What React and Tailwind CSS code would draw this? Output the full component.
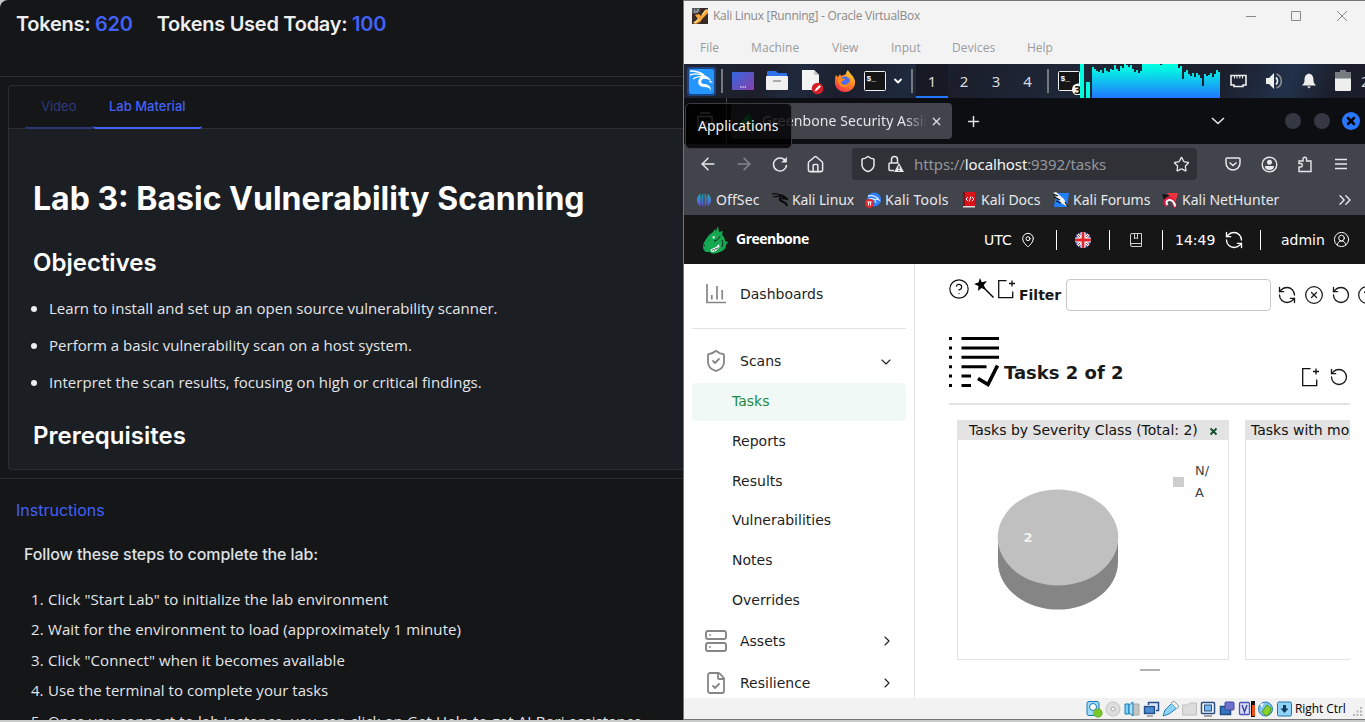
import React from 'react';
import {
  ArrowLeft, ArrowRight, ChevronDown, ChevronRight, ChevronsRight, CircleQuestionMark, CircleUserRound, CircleX,
  FileCheck, House, MapPin, Plus, RefreshCcw, RotateCcw, Server, Shield, ShieldCheck, Star, X,
} from 'lucide-react';

const SEGOE = "font-['Open_Sans','Noto_Sans',sans-serif]";
const NOTO = "font-['Noto_Sans',sans-serif]";
const DEJAVU = "font-['DejaVu_Sans',sans-serif]";

/* ---------- Lab page ---------- */

function LabPage() {
  const steps = [
    'Click "Start Lab" to initialize the lab environment',
    'Wait for the environment to load (approximately 1 minute)',
    'Click "Connect" when it becomes available',
    'Use the terminal to complete your tasks',
    'Once you connect to lab instance, you can click on Get Help to get AI Bori assistance',
  ];
  const spacing = ['tracking-[0.08px]', 'tracking-[0.08px]', 'tracking-[0.08px]', 'tracking-[0.03px]', 'tracking-[0.11px]'];
  return (
    <section className="flex h-[720px] w-[683px] shrink-0 flex-col overflow-hidden rounded-tl-lg bg-[#151618] font-['Inter',sans-serif]">
      <header className="flex h-[77px] shrink-0 gap-6 border-b border-[#2c2d31] pt-[10px] pl-4 text-xl font-semibold tracking-[-0.27px] text-[#eceef0]">
        <div>Tokens: <span className="text-[#4261f6]">620</span></div>
        <div>Tokens Used Today: <span className="text-[#4261f6]">100</span></div>
      </header>

      <div className="mt-2 ml-2 h-[385px] shrink-0 overflow-hidden rounded-l-[4px] border border-r-0 border-[#2c2e32] bg-[#1b1e23]">
        <nav className="flex h-[43px] border-b border-[#2c2e32] bg-[#151618] pl-4 text-[13px] leading-[41px]">
          <div className="h-[43px] w-[68px] rounded-b-[3px] border-b-2 border-[#2a3878] pl-4 text-[#2d3b80]">Video</div>
          <div className="h-[43px] w-[109px] rounded-b-[3px] border-b-2 border-[#4261f6] pl-4 font-medium text-[#4261f6]">Lab Material</div>
        </nav>
        <article className="pl-6 text-white">
          <h1 className="mt-[50px] text-[32px] leading-[40px] font-bold">Lab 3: Basic Vulnerability Scanning</h1>
          <h2 className="mt-[29px] text-2xl leading-[30px] font-semibold">Objectives</h2>
          <ul className={`mt-[12px] text-[15px] leading-[37px] text-[#e4e6e9] ${SEGOE}`}>
            {[
              'Learn to install and set up an open source vulnerability scanner.',
              'Perform a basic vulnerability scan on a host system.',
              'Interpret the scan results, focusing on high or critical findings.',
            ].map((t) => (
              <li key={t} className="flex items-center whitespace-nowrap tracking-[0.03px]">
                <span className="mr-[12px] -ml-[2px] size-[6px] rounded-full bg-[#eceef0]" />
                {t}
              </li>
            ))}
          </ul>
          <h2 className="mt-[20px] text-2xl leading-[30px] font-semibold">Prerequisites</h2>
        </article>
      </div>

      <div className="mt-2 flex-1 border-t border-[#2c2d31]">
        <h3 className="mt-[19px] ml-4 text-base leading-6 text-[#4261f6]">Instructions</h3>
        <p className="mt-[20px] ml-6 text-base leading-6 font-medium tracking-[-0.09px] text-[#dfe1e4]">Follow these steps to complete the lab:</p>
        <ol className={`mt-[18px] text-[15px] leading-[30.4px] text-[#e4e6e9] ${SEGOE}`}>
          {steps.map((t, i) => (
            <li key={t} className={`flex whitespace-nowrap ${spacing[i]}`}>
              <span className="w-[48px] shrink-0 pl-[31px]">{i + 1}.</span>
              {t}
            </li>
          ))}
        </ol>
      </div>
    </section>
  );
}

/* ---------- VirtualBox chrome ---------- */

function TitleBar() {
  return (
    <div className="flex h-[30px] shrink-0 items-center bg-[#f3f3f3] pl-2 text-[#8a8a8a]">
      <svg className="size-4" viewBox="0 0 16 16">
        <rect width="16" height="16" fill="#3a2a26" />
        <path d="M0 0h8v4L2 6 0 5z" fill="#555a60" />
        <path d="M2 2h1M5 2h2M2 4h4" stroke="#ccc" />
        <path d="M3 7l4-1 2 2 4-6h3v3l-5 5-3 4-4 2-3-1 5-4z" fill="#f7a63b" />
        <path d="M10 7l4-5h2M2 15l5-4" stroke="#ffe08a" strokeWidth="1.2" fill="none" />
      </svg>
      <span className={`ml-[5px] w-[533px] shrink-0 text-xs whitespace-nowrap tracking-[-0.28px] ${SEGOE}`}>Kali Linux [Running] - Oracle VirtualBox</span>
      <svg className="h-[12px] w-[104px]" viewBox="0 0 104 12" fill="none" stroke="#8a8a8a">
        <path d="M0 6.500h10M45.500 1.500h9v9h-9zM91 1l10 10M101 1l-10 10" />
      </svg>
    </div>
  );
}

function MenuBar() {
  return (
    <div className={`flex h-[33px] shrink-0 items-center bg-[#f3f3f3] pl-4 text-xs text-[#9b9b9b] ${SEGOE}`}>
      <span className="w-[51px]">File</span>
      <span className="w-[81px] tracking-[0.1px]">Machine</span>
      <span className="w-[59px]">View</span>
      <span className="w-[61px]">Input</span>
      <span className="w-[75px] tracking-[0.1px]">Devices</span>
      <span>Help</span>
    </div>
  );
}

function Terminal({ badge }) {
  return (
    <svg className="h-[28px] w-[22px] shrink-0" viewBox="0 0 22 28">
      <rect x=".5" y="4.500" width="21" height="19" rx="1" fill="#151515" stroke="#f0f0f0" />
      <text x="2.500" y="14" fontSize="8" fontWeight="bold" fill="#fff" fontFamily="Liberation Mono, monospace">$_</text>
      {badge && (
        <g>
          <circle cx="20" cy="22.500" r="6" fill="#f4f4f4" />
          <text x="16" y="27" fontSize="11" fontWeight="bold" fill="#111" fontFamily="DejaVu Sans, sans-serif">3</text>
        </g>
      )}
    </svg>
  );
}

const LOAD = [
  3, 5, 7, 8, 6, 9, 4, 7, 8, 5, 6, 1, 5, 7, 2, 4, 0, 1, 3, 1, 5, 8, 6, 9,
  7, 0, 0, 0, 0, 0, 0, 0, 0, 0, 1, 0, 0, 0, 0, 0, 0, 0, 0, 4,
  2, 15, 8, 6, 10, 12, 9, 13, 9, 11, 14, 22, 10, 12, 11, 9, 13, 10, 6, 8,
];

function CpuGraph() {
  return (
    <svg className="h-[34px] w-[140px] shrink-0" viewBox="0 0 140 34" shapeRendering="crispEdges">
      <defs>
        <linearGradient id="load" x1="0" y1="0" x2="0" y2="34" gradientUnits="userSpaceOnUse">
          <stop offset="0" stopColor="#00ffe0" />
          <stop offset=".2" stopColor="#04eee5" />
          <stop offset="1" stopColor="#2277ff" />
        </linearGradient>
      </defs>
      <rect width="4" height="34" fill="#00ffe0" />
      <rect x="6" y="18" width="4" height="16" fill="#00ffe0" />
      {LOAD.map((top, i) => (
        <rect key={i} x={12 + i * 2} y={top} width="2" height={34 - top} fill="url(#load)" />
      ))}
    </svg>
  );
}

function KaliPanel() {
  return (
    <div className={`flex h-[34px] shrink-0 items-center overflow-hidden bg-[#1c202d] bg-[linear-gradient(115deg,#1f2635_0%,#1c1f2b_12%,#202a3d_17%,#1b1e2b_25%,#1f2a3e_33%,#1b1e2a_40%,#1e2738_55%,#1b1f2c_78%,#22314a_88%,#1b1e2a_95%)] text-[15px] text-[#d8dade] ${NOTO}`}>
      <svg className="ml-[2px] size-[32px] shrink-0" viewBox="0 0 32 32">
        <rect x="1" y="2" width="29" height="29" rx="3" fill="#1b62c9" opacity=".55" />
        <rect x="3" y="4" width="25" height="25" rx="2" fill="#2596ff" />
        <path d="M4 6c5 0 10 1 14 4M4 10c5-2 10-1 14 1M7 14c4-3 8-3 12-1" stroke="#fff" strokeWidth="1.400" fill="none" />
        <path d="M15 9c4 1 8 3 10 6-3 0-5-2-8-1-3 2-2 5 1 5 4 0 7 2 7 7-1-3-3-4-7-4-5 0-7-4-5-8 1-2 3-3 4-3z" fill="#fff" />
        <path d="M24 15l3 3-4-1z" fill="#fff" />
      </svg>
      <i className="ml-[3px] h-[24px] w-[2px] shrink-0 bg-[#767980]" />
      <svg className="ml-[9px] h-[28px] w-[22px] shrink-0" viewBox="0 0 22 28">
        <defs><linearGradient id="desk" x2="1" y2="1"><stop stopColor="#3268e0" /><stop offset="1" stopColor="#8a3fa8" /></linearGradient></defs>
        <rect y="5" width="22" height="18" rx="1" fill="url(#desk)" />
        <path d="M8 20h6" stroke="#fff" strokeWidth="1.200" strokeDasharray="1.500 .8" />
      </svg>
      <svg className="ml-[12px] h-[28px] w-[22px] shrink-0" viewBox="0 0 22 28">
        <path d="M1 5a1 1 0 011-1h8l2 2h8a1 1 0 011 1v5H1z" fill="#2f6fe8" />
        <rect y="9" width="22" height="14" rx="1" fill="#f1f1f1" />
        <path d="M7 14h8" stroke="#aaa" strokeWidth="2" />
      </svg>
      <svg className="ml-[14px] h-[28px] w-[22px] shrink-0" viewBox="0 0 22 28">
        <path d="M0 3h12l5 5v15H0z" fill="#f3f3f3" />
        <path d="M12 3l5 5h-5z" fill="#c8c8c8" />
        <circle cx="15.500" cy="21.500" r="5.800" fill="#d61f26" />
        <path d="M12.500 24.500l1-2.500 4-4 1.500 1.500-4 4z" fill="#fff" />
      </svg>
      <svg className="ml-[10px] h-[28px] w-[22px] shrink-0" viewBox="0 0 22 28">
        <defs><linearGradient id="fox" x1=".8" x2=".2" y2="1"><stop stopColor="#ffd83c" /><stop offset=".45" stopColor="#ff8a1f" /><stop offset="1" stopColor="#f02a52" /></linearGradient></defs>
        <path d="M2 8l2 2 2-3 1 2c2-1 4-1 5-2 0-2 1-3 2-4 1 3 6 6 7 11 1 6-4 11-10 11S0 20 1 14c0-2 0-4 1-6z" fill="url(#fox)" />
        <circle cx="11" cy="14.500" r="5" fill="#4a6df0" />
        <path d="M4 11c3-1 4 1 7 1-1 2-4 2-4 4 2 3 7 2 9-2 0 5-4 7-7 6-4-1-6-5-5-9z" fill="#ff8a1f" />
      </svg>
      <div className="ml-[8px] flex"><Terminal /></div>
      <ChevronDown className="ml-[6px] size-[12px] shrink-0 text-white" strokeWidth={3.600} />
      <i className="ml-[7px] h-[24px] w-[2px] shrink-0 bg-[#767980]" />
      <span className="ml-[3px] h-[34px] w-[32px] shrink-0 border-b-2 border-[#2277ff] bg-[#171a25] text-center leading-[34px]">1</span>
      <span className="w-[32px] shrink-0 text-center">2</span>
      <span className="w-[32px] shrink-0 text-center">3</span>
      <span className="w-[31px] shrink-0 text-center">4</span>
      <i className="ml-[4px] h-[24px] w-[2px] shrink-0 bg-[#767980]" />
      <div className="ml-[9px] flex"><Terminal badge /></div>
      <CpuGraph />
      <svg className="ml-[10px] h-[20px] w-[17px] shrink-0" viewBox="0 0 17 20">
        <path d="M1 4.500h15v9.500h-3v1.500H4V14H1z" fill="none" stroke="#eee" strokeWidth="1.600" />
        <path d="M4.500 4.500v3M7 4.500v3M9.800 4.500v3M12.500 4.500v3" stroke="#eee" strokeWidth="1" />
      </svg>
      <svg className="ml-[18px] h-[20px] w-[18px] shrink-0" viewBox="0 0 18 20">
        <path d="M1 7h3l5-5v16l-5-5H1z" fill="#eee" />
        <path d="M11 6.500a5 5 0 010 7" stroke="#eee" strokeWidth="1.800" fill="none" />
        <path d="M11.500 3a7.500 7.500 0 010 14" stroke="#8b8e96" strokeWidth="1.600" fill="none" />
      </svg>
      <svg className="ml-[19px] h-[20px] w-[14px] shrink-0" viewBox="0 0 14 20">
        <path d="M7 2.500c3.500 1 4.500 3 4.500 7 0 2 1 3.500 2.500 5H0c1.500-1.500 2.500-3 2.500-5 0-4 1-6 4.500-7z" fill="#eee" />
        <path d="M5 15.500h4l-2 2z" fill="#eee" />
      </svg>
      <svg className="ml-[19px] h-[24px] w-[16px] shrink-0" viewBox="0 0 16 24">
        <path d="M0 3h5V1h6v2h5v8H0z" fill="#777b82" />
        <path d="M0 9.500h16V21a1 1 0 01-1 1H1a1 1 0 01-1-1z" fill="#eee" />
      </svg>
      <span className="ml-[10px] shrink-0">2</span>
    </div>
  );
}

/* ---------- Browser chrome ---------- */

function BrowserTabs() {
  return (
    <div className={`relative flex h-[46px] shrink-0 items-center bg-[#0d0e11] text-sm text-[#e4e4e7] ${NOTO}`}>
      <svg className="ml-[12px] size-[18px] shrink-0" viewBox="0 0 18 18" fill="none" stroke="#aaa" strokeWidth="1.500">
        <path d="M4 1h10M2 4.500h14V14a2 2 0 01-2 2H4a2 2 0 01-2-2zM6 9l3 3 3-3" />
      </svg>
      <i className="ml-[12px] h-[46px] w-px bg-[#45474e]" />
      <div className="ml-[4px] flex h-[36px] w-[221px] shrink-0 items-center rounded-[4px] bg-[#42444c]">
        <svg className="ml-[8px] size-[16px] shrink-0" viewBox="0 0 26 28"><DragonShape /></svg>
        <span className="ml-[7px] w-[168px] overflow-hidden mask-r-from-85% mask-r-to-98% tracking-[0.08px] whitespace-nowrap">Greenbone Security Assistant</span>
        <X className="size-[13px] shrink-0" strokeWidth={2.200} />
      </div>
      <Plus className="ml-[13px] size-[17px] shrink-0" strokeWidth={2.100} />
      <svg className="ml-[229px] h-[8px] w-[14px] shrink-0" viewBox="0 0 14 8" fill="none" stroke="#e4e4e7" strokeWidth="1.600"><path d="M1 1l6 5.500L13 1" /></svg>
      <i className="ml-[60px] size-[16px] shrink-0 rounded-full bg-[#353843]" />
      <i className="ml-[13px] size-[16px] shrink-0 rounded-full bg-[#353843]" />
      <span className="ml-[12px] flex size-[18px] shrink-0 items-center justify-center rounded-full bg-[#2777ff] text-black"><X className="size-[12px]" strokeWidth={5} /></span>
      <div className="absolute top-[5px] left-px z-10 h-[46px] w-[107px] rounded-[5px] border border-[#3b3c40] bg-black/80 pl-[12px] leading-[43px] text-[#f5f5f5]">Applications</div>
    </div>
  );
}

function AddressBar() {
  return (
    <div className={`flex h-[40px] shrink-0 items-center bg-[#42444c] text-[#e8e8ea] ${NOTO}`}>
      <ArrowLeft className="ml-[14px] size-[20px] shrink-0" strokeWidth={1.800} />
      <ArrowRight className="ml-[16px] size-[20px] shrink-0 text-[#85878d]" strokeWidth={1.800} />
      <svg className="ml-[18px] size-[16px] shrink-0" viewBox="0 0 16 16" fill="none" stroke="currentColor" strokeWidth="1.500">
        <path d="M13.800 5.500A6.500 6.500 0 1014.500 9" /><path d="M14.800 1v5.500H9.300z" fill="currentColor" stroke="none" />
      </svg>
      <House className="ml-[18px] size-[19px] shrink-0" strokeWidth={1.900} />
      <div className="ml-[27px] flex h-[32px] w-[345px] shrink-0 items-center rounded-[4px] bg-[#303137]">
        <Shield className="ml-[7px] size-[18px] shrink-0" strokeWidth={2} />
        <svg className="ml-[11px] h-[18px] w-[16px] shrink-0" viewBox="0 0 16 18" fill="none" stroke="currentColor" strokeWidth="1.500">
          <path d="M3.500 8V4.500a3 3 0 016 0V8M6 15.500H2a1 1 0 01-1-1V9a1 1 0 011-1h8.500" />
          <path d="M11 8l5 9H6z" fill="currentColor" stroke="none" /><path d="M11 11v3M11 15v1" stroke="#303137" strokeWidth="1.200" />
        </svg>
        <span className="ml-[10px] w-[259px] text-[15px] tracking-[-0.11px] text-[#96979c]">https://<span className="text-[#f5f5f6]">localhost</span>:9392/tasks</span>
        <Star className="size-[17px] shrink-0" strokeWidth={1.800} />
      </div>
      <svg className="ml-[28px] h-[16px] w-[16px] shrink-0" viewBox="0 0 16 16" fill="none" stroke="currentColor" strokeWidth="1.500">
        <path d="M2 2h12a1 1 0 011 1v4a7 7 0 01-14 0V3a1 1 0 011-1zM4.500 6.500L8 9.500l3.500-3" />
      </svg>
      <svg className="ml-[20px] size-[17px] shrink-0" viewBox="0 0 17 17" fill="none" stroke="currentColor" strokeWidth="1.400">
        <circle cx="8.500" cy="8.500" r="7.300" /><circle cx="8.500" cy="6.200" r="2.500" fill="currentColor" stroke="none" /><path d="M4 10h9c0 3-2 4-4.500 4S4 13 4 10z" fill="currentColor" stroke="none" />
      </svg>
      <svg className="ml-[19px] size-[17px] shrink-0" viewBox="0 0 17 17" fill="none" stroke="currentColor" strokeWidth="1.400">
        <path d="M2 15.500V11h2a1.800 1.800 0 000-3.500H2V5h4V3a1.800 1.800 0 013.600 0v2H14v10.500z" />
      </svg>
      <svg className="ml-[21px] h-[12px] w-[12px] shrink-0" viewBox="0 0 12 12" stroke="currentColor" strokeWidth="1.300"><path d="M0 1.500h12M0 6h12M0 10.500h12" /></svg>
    </div>
  );
}

function Bookmarks() {
  return (
    <div className={`flex h-[31px] shrink-0 items-center bg-[#42444c] text-sm text-[#e8e8ea] ${NOTO}`}>
      <svg className="ml-[12px] mr-[4px] size-[16px] shrink-0" viewBox="0 0 16 16">
        <defs><linearGradient id="off" x2="0" y2="1"><stop stopColor="#16b5b0" /><stop offset="1" stopColor="#6448e0" /></linearGradient></defs>
        <path d="M7.300 1v14C4.500 13 5 3 7.300 1zM4.700 2v12C-.5 12-.5 4 4.700 2zM8.700 1v14c2.800-2 2.300-12 0-14zM11.300 2v12c5.200-2 5.200-10 0-12z" fill="url(#off)" />
      </svg>
      <span className="w-[56px] shrink-0 tracking-[0.1px]">OffSec</span>
      <svg className="mr-[4px] size-[16px] shrink-0" viewBox="0 0 16 16" fill="none" stroke="#0b0b0c" strokeWidth="1.300">
        <path d="M0 2c4-1 7 0 9 2M1 5c3-1 5-1 8 0" /><path d="M7 3c4 0 6 2 8 4-4-1-8-1-7 1s6 1 7 6" strokeWidth="2" />
      </svg>
      <span className="w-[73px] shrink-0 tracking-[-0.1px] whitespace-nowrap">Kali Linux</span>
      <svg className="mr-[4px] size-[16px] shrink-0" viewBox="0 0 16 16">
        <circle cx="9" cy="7.500" r="7" fill="#2b7fff" /><path d="M3 4c5-1 9 1 11 4-4-2-5 0-3 3M4 7c3-1 5 0 7 1" stroke="#dceaff" strokeWidth="1.300" fill="none" />
        <circle cx="4.500" cy="11.500" r="4.500" fill="#e3262f" /><path d="M2.500 10h4M3.500 10v3.500M5.500 10v3.500" stroke="#fff" />
      </svg>
      <span className="w-[77px] shrink-0 tracking-[0.23px] whitespace-nowrap">Kali Tools</span>
      <svg className="mr-[5px] h-[16px] w-[14px] shrink-0" viewBox="0 0 14 16">
        <path d="M1 0h12v14H1z" fill="#d9131b" /><path d="M1 0h2v14H1z" fill="#8c0c12" /><path d="M1 14h12v1.500H1z" fill="#ddd" />
        <path d="M6 5L4 7l2 2M10 5l2 2-2 2M8.800 4.500l-1.500 5" stroke="#fff" fill="none" />
      </svg>
      <span className="w-[72px] shrink-0 whitespace-nowrap">Kali Docs</span>
      <svg className="mr-[4px] size-[16px] shrink-0" viewBox="0 0 16 16">
        <path d="M3 1h13l-2 14H1z" fill="#1f7fff" /><path d="M0 1l3-1 8 7 4 8-7-4z" fill="#f2f2f2" /><path d="M0 2l5 2M1 5l6 3M3 9l5 2M12 10l3 5" stroke="#111" strokeWidth="1.200" />
      </svg>
      <span className="w-[89px] shrink-0 whitespace-nowrap">Kali Forums</span>
      <svg className="mr-[4px] size-[16px] shrink-0" viewBox="0 0 16 16">
        <path d="M5 1h11l-3 10z" fill="#f0323c" /><path d="M0 2l7 1-5 5z" fill="#111" />
        <path d="M11.500 15C14 13 11 6 7 6.500 3 7 2.500 11 5 14" fill="none" stroke="#e01840" strokeWidth="3.600" /><path d="M13 14.500C13 11 10 7.500 7 8c-3 .5-3 3-1.500 5" stroke="#fff" strokeWidth="1.900" fill="none" />
      </svg>
      <span className="w-[153px] shrink-0 whitespace-nowrap">Kali NetHunter</span>
      <ChevronsRight className="size-[20px] shrink-0" strokeWidth={1.700} />
    </div>
  );
}

/* ---------- Greenbone app ---------- */

function DragonShape() {
  return (
    <g>
      <path d="M1 21c0-4 3-8 6-12l4-3 2-3 1 2 2-5 1 6 4-1-1 4c2 1 3 4 3 6l3 1-2 3c0 5-5 7-9 8-3 1-6 1-7-1l-4 0c-2-1-3-3-3-5z" fill="#14a850" />
      <path d="M8.500 23.500l5.500-2.500 3-3 .5 3c-1.500 3-4.500 5-8 5z" fill="#fff" />
      <path d="M10 25l1.500-2 1 1.500 1.500-2.500 1 1.500 1.500-2.500" stroke="#14502c" strokeWidth=".7" fill="none" />
      <path d="M10 11l3-1-1 3z" fill="#fff" />
      <path d="M12 15c2 0 5-2 6-5M20 14c1 2 1 5 0 7M2 19l1 1" stroke="#11181a" strokeWidth="1" fill="none" />
    </g>
  );
}

function AppHeader() {
  return (
    <div className={`flex h-[49px] shrink-0 items-center bg-[#161616] text-sm text-white ${DEJAVU}`}>
      <svg className="ml-[18px] h-[28px] w-[26px] shrink-0" viewBox="0 0 26 28"><DragonShape /></svg>
      <span className="-mt-[2px] ml-[8px] w-[247px] shrink-0 font-['Open_Sans',sans-serif] text-[14px] font-bold tracking-[-0.5px]">Greenbone</span>
      <span className="mt-px ml-px w-[36px]">UTC</span>
      <MapPin className="size-[16px] shrink-0" strokeWidth={1.500} />
      <i className="ml-[20px] h-[20px] w-px bg-white" />
      <svg className="ml-[18px] size-[16px] shrink-0" viewBox="0 0 16 16">
        <defs><clipPath id="round"><circle cx="8" cy="8" r="8" /></clipPath></defs>
        <g clipPath="url(#round)">
          <rect width="16" height="16" fill="#2f55b0" />
          <path d="M0 0l16 16M16 0L0 16" stroke="#fff" strokeWidth="2.800" /><path d="M0 0l16 16M16 0L0 16" stroke="#e0262c" strokeWidth="1" />
          <path d="M8 0v16M0 8h16" stroke="#fff" strokeWidth="5" /><path d="M8 0v16M0 8h16" stroke="#e0262c" strokeWidth="2.800" />
        </g>
      </svg>
      <i className="ml-[18px] h-[20px] w-px bg-white" />
      <svg className="ml-[20px] h-[14px] w-[12px] shrink-0" viewBox="0 0 12 14" fill="none" stroke="#d0d0d0">
        <path d="M.5 12V2A1.500 1.500 0 012 .5h9.500v13H2A1.500 1.500 0 01.5 12 1.500 1.500 0 012 10.500h9.500M4.500 1v5l1.500-1.500L7.500 6V1" />
      </svg>
      <i className="ml-[20px] h-[20px] w-px bg-white" />
      <span className="ml-[12px] w-[49px] shrink-0">14:49</span>
      <RefreshCcw className="size-[20px] shrink-0" strokeWidth={1.600} />
      <i className="ml-[16px] h-[20px] w-px bg-white" />
      <span className="ml-[20px] w-[52px] shrink-0">admin</span>
      <CircleUserRound className="size-[17px] shrink-0" strokeWidth={1.400} />
    </div>
  );
}

function Sidebar() {
  return (
    <aside className={`flex w-[231px] shrink-0 flex-col overflow-hidden border-r border-[#e3e3e3] pr-2 pl-2 text-sm text-[#1e1e1e] ${DEJAVU}`}>
      <div className="flex h-[60px] shrink-0 items-center pl-[13px]">
        <svg className="size-[22px] shrink-0" viewBox="0 0 22 22" fill="none" stroke="#868686" strokeWidth="1.700"><path d="M2 1v18.500h19M6.800 12v4.500M12 3v13.500M17.200 7v9.500" /></svg>
        <span className="ml-[13px]">Dashboards</span>
      </div>
      <i className="mt-[4px] h-px shrink-0 bg-[#e3e3e3]" />
      <div className="mt-[5px] flex h-[49px] shrink-0 items-center pt-[4px] pl-[12px]">
        <ShieldCheck className="size-[24px] shrink-0 text-[#868686]" strokeWidth={1.800} />
        <span className="ml-[12px] w-[138px]">Scans</span>
        <ChevronDown className="mt-[2px] size-[16px]" strokeWidth={1.600} />
      </div>
      <div className="flex h-[38px] shrink-0 items-center rounded-[4px] bg-[#f0f9f6] pb-[2px] pl-[40px] text-[#1b8a45]">Tasks</div>
      {['Reports', 'Results', 'Vulnerabilities', 'Notes', 'Overrides'].map((t) => (
        <div key={t} className="flex h-[39.75px] shrink-0 items-center pl-[40px]">{t}</div>
      ))}
      <div className="flex h-[42px] shrink-0 items-center pl-[12px]">
        <Server className="size-[24px] shrink-0 text-[#868686]" strokeWidth={1.900} />
        <span className="ml-[12px] w-[138px]">Assets</span>
        <ChevronRight className="ml-px size-[16px]" strokeWidth={1.600} />
      </div>
      <div className="flex h-[42px] shrink-0 items-center pl-[12px]">
        <FileCheck className="size-[24px] shrink-0 text-[#868686]" strokeWidth={1.800} />
        <span className="ml-[12px] w-[138px]">Resilience</span>
        <ChevronRight className="ml-px size-[16px]" strokeWidth={1.600} />
      </div>
    </aside>
  );
}

function NewDoc() {
  return (
    <svg className="size-[20px] shrink-0" viewBox="0 0 20 20" fill="none" stroke="#111" strokeWidth="1.300">
      <path d="M10.500 1.700H2.700v17h14V12.500M13 4.500h6M16 1.500v6" />
    </svg>
  );
}

function TasksPage() {
  return (
    <main className={`flex w-[451px] shrink-0 flex-col overflow-hidden pl-[33px] text-[#191919] ${DEJAVU}`}>
      <div className="flex h-[64px] shrink-0 items-start pt-[14px]">
        <CircleQuestionMark className="size-[22px] shrink-0 text-[#111]" strokeWidth={1.300} />
        <svg className="ml-[4px] size-[22px] shrink-0" viewBox="0 0 22 22">
          <path d="M6 0l1.800 4.200L13 3 9.800 7l2.200 5-4.500-2L4 13l.5-5L0 6l4.500-1.500z" fill="#000" /><path d="M8 8l11.500 11.500" stroke="#000" strokeWidth="1.400" />
        </svg>
        <div className="mt-px"><NewDoc /></div>
        <span className="mt-[8px] ml-[3px] w-[47px] shrink-0 text-sm leading-[18px] font-bold">Filter</span>
        <span className="mt-px h-[32px] w-[205px] shrink-0 rounded-[4px] border border-[#c8c8c8]" />
        <RefreshCcw className="mt-[7px] ml-[6px] size-[20px] shrink-0" strokeWidth={1.600} />
        <CircleX className="mt-[7px] ml-[7px] size-[20px] shrink-0" strokeWidth={1.500} />
        <RotateCcw className="mt-[7px] ml-[7px] size-[20px] shrink-0" strokeWidth={1.600} />
        <CircleQuestionMark className="mt-[7px] ml-[6px] size-[20px] shrink-0" strokeWidth={1.500} />
      </div>
      <div className="ml-px flex h-[77px] w-[401px] shrink-0 items-start border-b-2 border-[#e3e3e3]">
        <svg className="mt-[8px] h-[52px] w-[51px] shrink-0" viewBox="0 0 51 52" stroke="#000" strokeWidth="3" fill="none">
          <path d="M0 2.500h3M0 12h3M0 21.300h3M0 30.700h3M0 40h3M0 49.500h3M12.500 2.500h37.500M12.500 12h37.500M12.500 21.300h37.500M12.500 30.700h25M12.500 40h9.500M12.500 49.500h9.500" />
          <path d="M29 42.500l10 6 9.500-19" strokeWidth="3.600" />
        </svg>
        <h1 className="mt-[33px] ml-[4px] w-[297px] shrink-0 text-lg leading-[24px] font-bold">Tasks 2 of 2</h1>
        <div className="mt-[39px] -ml-px flex"><NewDoc /></div>
        <RotateCcw className="mt-[39px] ml-[9px] size-[20px] shrink-0" strokeWidth={1.600} />
      </div>
      <div className="mt-[15px] ml-[9px] flex h-[240px] w-[393px] shrink-0 overflow-hidden text-sm">
        <div className="flex w-[272px] shrink-0 flex-col border border-t-0 border-[#e3e3e3]">
          <div className="flex h-[20px] shrink-0 items-center bg-[#e3e3e3] pl-[11px] text-[#111]">
            <span className="w-[240px] whitespace-nowrap">Tasks by Severity Class (Total: 2)</span>
            <svg className="mt-[3px] size-[9px]" viewBox="0 0 9 9" stroke="#0f4f2d" strokeWidth="1.800"><path d="M1.500 1.500l6 6M7.500 1.500l-6 6" /></svg>
          </div>
          <div className="flex flex-1 pl-[39px]">
            <svg className="mt-[48px] h-[124px] w-[122px] shrink-0" viewBox="0 0 122 124">
              <path d="M1 49v25a60 47.500 0 00120 0V49z" fill="#858585" />
              <ellipse cx="61" cy="49.500" rx="60.300" ry="48" fill="#c0c0c0" />
              <text x="26.500" y="54" fontSize="13" fontWeight="bold" fill="#f2f2f2" fontFamily="DejaVu Sans, sans-serif">2</text>
            </svg>
            <i className="mt-[37px] ml-[54px] h-[10px] w-[11px] bg-[#cdcdcd]" />
            <span className="mt-[20px] ml-[11px] w-[20px] text-[13px] leading-[22px] text-[#444]">N/<br />A</span>
          </div>
        </div>
        <div className="ml-[16px] w-[272px] shrink-0 border border-t-0 border-[#e3e3e3]">
          <div className="flex h-[20px] items-center bg-[#e3e3e3] pl-[5px] whitespace-nowrap text-[#111]">Tasks with most High Results</div>
        </div>
      </div>
      <i className="mt-[9px] ml-[192px] h-[2px] w-[20px] shrink-0 bg-[#b2b2b2]" />
    </main>
  );
}

/* ---------- VM status bar ---------- */

function StatusBar() {
  return (
    <div className={`flex h-[21px] shrink-0 items-center bg-[#f2f2f2] text-xs text-black ${SEGOE}`}>
      <svg className="ml-[401px] h-[18px] w-[210px] shrink-0" viewBox="0 0 210 18">
        <rect x="2" y="1.500" width="12" height="14" rx="2" fill="#9fdcfa" stroke="#1878b4" /><circle cx="8" cy="7" r="3.500" fill="#fff" stroke="#1878b4" /><circle cx="13" cy="13" r="4.300" fill="#7ac62a" stroke="#5aa31c" strokeWidth=".6" />
        <circle cx="28" cy="9" r="7" fill="#dedede" stroke="#c0c0c0" /><circle cx="28" cy="9" r="2" fill="#fff" stroke="#aaa" />
        <path d="M47 4h7v11h-7z" fill="#c4c4c4" stroke="#aaa" /><path d="M40 4h4v10h-4z" fill="#7fd0f7" stroke="#1878b4" /><path d="M44 5l4-3v14l-4-3z" fill="#a9e0fa" stroke="#1878b4" />
        <rect x="63.500" y="2.500" width="10" height="8" fill="#dce9f5" stroke="#274f8d" strokeWidth="1.500" /><rect x="59.500" y="6.500" width="10" height="7" fill="#4c8bd0" stroke="#fff" strokeWidth="3" /><rect x="59.500" y="6.500" width="10" height="7" fill="#4c8bd0" stroke="#274f8d" strokeWidth="1.500" /><path d="M62 16h6" stroke="#666" />
        <path d="M78 16l2-6 7-7 5 5-8 6z" fill="#8bd3f8" stroke="#2a82b8" /><path d="M86 3l3-2 5 5-2 3z" fill="#eee" stroke="#8aa" />
        <path d="M97.500 5h5l2-2h7v12h-14z" fill="#dcdcdc" stroke="#bfbfbf" />
        <rect x="116.500" y="2.500" width="13" height="11" rx="1" fill="#fff" stroke="#234b86" strokeWidth="1.500" /><rect x="119.500" y="5" width="7" height="6" fill="#75b9f0" stroke="#234b86" /><path d="M119 16h8" stroke="#555" />
        <rect x="135.500" y="6.500" width="10" height="8" fill="#3676bd" stroke="#234b86" strokeWidth="1.500" /><rect x="140" y="2" width="9" height="8" rx="1" fill="#6d72cf" stroke="#4147a0" />
        <rect x="154.500" y="2.500" width="10" height="12" rx="1" fill="#d9dcfa" stroke="#4b53b8" strokeWidth="1.300" /><path d="M157 5l2.500 7L162 5" fill="none" stroke="#39419f" strokeWidth="1.400" /><rect x="166" y="1" width="4" height="16" fill="#111" /><rect x="167" y="5" width="3" height="11" fill="#f04f16" />
        <circle cx="180.500" cy="9" r="7" fill="#7fc5f0" stroke="#2b7bb0" /><path d="M177 12l5-7 4 3-1 5-4 3z" fill="#8ad32f" stroke="#4d9a16" /><path d="M175 4l4-1-2 5z" fill="#e8f6ff" />
        <rect x="192.500" y="2" width="14" height="14" rx="1.500" fill="#8fd4f8" stroke="#2175a8" /><path d="M199.500 5v4" stroke="#15395c" strokeWidth="3" /><path d="M195.500 8.500h8l-4 4.500z" fill="#15395c" />
      </svg>
      <span className="w-[58px] shrink-0 tracking-[-0.08px] whitespace-nowrap">Right Ctrl</span>
      <svg className="mt-[6px] size-[10px] shrink-0" viewBox="0 0 10 10" fill="#b5b5b5"><path d="M7 0h2v2H7zM7 3.500h2v2H7zM3.500 3.500h2v2h-2zM7 7h2v2H7zM3.500 7h2v2h-2zM0 7h2v2H0z" /></svg>
    </div>
  );
}

function VirtualMachine() {
  return (
    <section className="flex h-[720px] w-[682px] shrink-0 flex-col overflow-hidden border-t border-b border-l border-[#757575] bg-white">
      <TitleBar />
      <MenuBar />
      <KaliPanel />
      <BrowserTabs />
      <AddressBar />
      <Bookmarks />
      <AppHeader />
      <div className="flex h-[434px] shrink-0 overflow-hidden">
        <Sidebar />
        <TasksPage />
      </div>
      <StatusBar />
    </section>
  );
}

export default function App() {
  return (
    <div className="flex h-[722px] w-[1365px] overflow-hidden bg-[#c9cbcb]">
      <LabPage />
      <VirtualMachine />
    </div>
  );
}
